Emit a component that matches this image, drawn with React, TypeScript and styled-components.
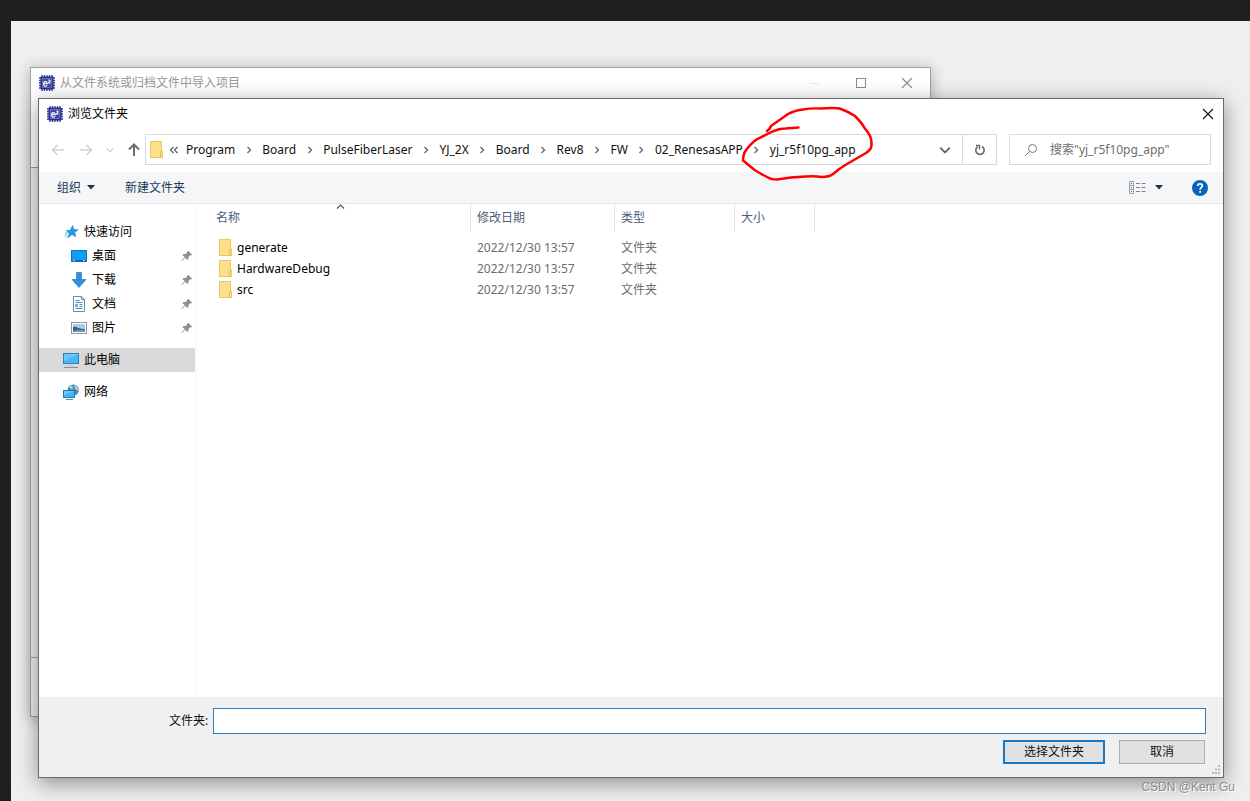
import React from 'react';
import styled, { createGlobalStyle } from 'styled-components';

const GlobalStyle = createGlobalStyle`
  * { box-sizing: border-box; }
  body {
    margin: 0;
    background: #1f1f1f;
    font-family: "Noto Sans", "Noto Sans CJK SC", sans-serif;
    font-size: 12px;
    line-height: 20px;
    color: #111;
  }
  button, input { font: inherit; color: inherit; }
  a { color: inherit; text-decoration: none; }
  svg { display: block; flex: none; }
`;

const Screen = styled.main`
  display: flex;
  min-height: 100vh;
  padding: 21px 0 0 11px;
`;

const Desktop = styled.div`
  position: relative;
  display: flex;
  flex: 1;
  min-width: 0;
  padding: 77px 26px 23px 27px;
  background: #efefef;
  overflow: hidden;
`;

const BackWindow = styled.section`
  position: absolute;
  top: 46px;
  left: 19px;
  bottom: 84px;
  width: 901px;
  display: flex;
  flex-direction: column;
  border: 1px solid #a0a0a0;
  background: #efefef;
  box-shadow: 0 2px 14px rgba(0, 0, 0, 0.28);
`;

const BackHeader = styled.div`
  height: 100px;
  background: #fff;
  border-bottom: 1px solid #a0a0a0;
`;

const BackBody = styled.div`
  flex: 1;
`;

const BackFooter = styled.div`
  height: 59px;
  border-top: 1px solid #a0a0a0;
`;

const TitleBar = styled.header<{ $inactive?: boolean }>`
  display: flex;
  align-items: center;
  gap: 5px;
  height: 29px;
  padding-left: 8px;
  padding-right: ${(p) => (p.$inactive ? 16 : 8)}px;
  color: ${(p) => (p.$inactive ? '#999' : '#000')};
`;

const Title = styled.h1`
  flex: 1;
  margin: 0;
  font-size: 12px;
  font-weight: 400;
`;

const WindowButtons = styled.div`
  display: flex;
  gap: 32px;
`;

const IconButton = styled.button`
  display: flex;
  align-items: center;
  justify-content: center;
  padding: 0;
  border: 0;
  background: none;
`;

const Dialog = styled.section`
  position: relative;
  display: flex;
  flex: 1;
  flex-direction: column;
  min-width: 0;
  border: 1px solid #6a6a6a;
  background: #fff;
  box-shadow: 0 5px 20px rgba(0, 0, 0, 0.42);
`;

const AddressRow = styled.div`
  display: flex;
  align-items: center;
  height: 44px;
  padding: 0 12px 1px 11px;
`;

const NavButtons = styled.nav`
  display: flex;
  align-items: center;
  gap: 12px;
  width: 90px;
  margin-right: 5px;
`;

const AddressBar = styled.div`
  display: flex;
  flex: 1;
  align-items: center;
  height: 31px;
  margin-right: 12px;
  padding-left: 4px;
  border: 1px solid #d9d9d9;
`;

const Crumbs = styled.nav`
  display: flex;
  flex: 1;
  align-items: center;
  margin-left: 5px;
  font-size: 12px;
`;

const Crumb = styled.a`
  position: relative;
  white-space: nowrap;
`;

const Overflow = styled.span`
  margin-right: 7px;
`;

const Separator = styled.span`
  display: flex;
  justify-content: center;
  width: 27px;
`;

const Scribble = styled.svg`
  position: absolute;
  top: -38px;
  left: -32px;
  z-index: 1;
  pointer-events: none;
`;

const BarButton = styled(IconButton)<{ $divided?: boolean }>`
  width: 34px;
  height: 29px;
  border-left: ${(p) => (p.$divided ? '1px solid #d9d9d9' : '0')};
`;

const SearchBox = styled.label`
  display: flex;
  align-items: center;
  gap: 12px;
  width: 202px;
  height: 31px;
  padding-left: 14px;
  border: 1px solid #d9d9d9;
`;

const SearchInput = styled.input`
  flex: 1;
  min-width: 0;
  padding: 0;
  border: 0;
  outline: 0;
  background: none;
  &::placeholder { color: #6d6d6d; opacity: 1; }
`;

const Toolbar = styled.div`
  display: flex;
  align-items: center;
  height: 32px;
  padding: 0 15px 0 18px;
  border-bottom: 1px solid #e4e6ea;
  background: #f5f6f8;
  color: #1e395b;
`;

const ToolButton = styled(IconButton)`
  gap: 6px;
  margin-right: 30px;
`;

const ToolRight = styled.div`
  display: flex;
  align-items: center;
  gap: 29px;
  margin-left: auto;
`;

const Content = styled.div`
  display: flex;
  flex: 1;
`;

const Sidebar = styled.nav`
  width: 158px;
  padding: 16px 1px 0 0;
  border-right: 1px solid #f7f7f7;
`;

const SideItem = styled.a<{ $nested?: boolean; $selected?: boolean; $apart?: boolean }>`
  display: flex;
  align-items: center;
  gap: 5px;
  height: 24px;
  margin-top: ${(p) => (p.$apart ? 8 : 0)}px;
  padding-left: ${(p) => (p.$nested ? 32 : 24)}px;
  padding-right: 2px;
  background: ${(p) => (p.$selected ? '#d9d9d9' : 'transparent')};
  color: #000;
`;

const SideLabel = styled.span`
  flex: 1;
`;

const Files = styled.div`
  flex: 1;
`;

const FileTable = styled.table`
  table-layout: fixed;
  width: 618px;
  border-collapse: separate;
  border-spacing: 0;
`;

const HeadCell = styled.th<{ $width: number; $first?: boolean }>`
  position: relative;
  width: ${(p) => p.$width}px;
  height: 28px;
  padding: 0 0 0 ${(p) => (p.$first ? 19 : 6)}px;
  border-right: 1px solid #e5e5e5;
  color: #4c607a;
  font-weight: 400;
  text-align: left;
`;

const SortMark = styled.svg`
  position: absolute;
  top: 0;
  left: 139px;
`;

const HeadGap = styled.tr`
  height: 5px;
`;

const Cell = styled.td`
  height: 21px;
  padding: 0 0 0 6px;
  color: #6d6d6d;
`;

const NameCell = styled(Cell)`
  padding-left: 22px;
  color: #000;
`;

const FileName = styled.a`
  display: flex;
  align-items: center;
  gap: 4px;
`;

const Footer = styled.form`
  position: relative;
  display: flex;
  flex-direction: column;
  gap: 6px;
  height: 80px;
  padding: 11px 17px 0 130px;
  background: #f0f0f0;
`;

const Field = styled.label`
  display: flex;
  align-items: center;
  gap: 5px;
`;

const FolderInput = styled.input`
  flex: 1;
  min-width: 0;
  height: 26px;
  padding: 0 6px;
  border: 1px solid #2f7fbf;
  outline: 0;
  background: #fff;
`;

const Actions = styled.div`
  display: flex;
  justify-content: flex-end;
  gap: 14px;
  padding-right: 1px;
`;

const ActionButton = styled.button<{ $primary?: boolean }>`
  width: ${(p) => (p.$primary ? 102 : 86)}px;
  height: 24px;
  padding: 0;
  border: ${(p) => (p.$primary ? '2px solid #1878c8' : '1px solid #adadad')};
  background: #e1e1e1;
  line-height: 18px;
`;

const Grip = styled.svg`
  position: absolute;
  right: 2px;
  bottom: 2px;
`;

const Watermark = styled.div`
  position: absolute;
  right: 15px;
  bottom: 4px;
  color: #8c8c8c;
  font-family: "Liberation Sans", sans-serif;
  text-shadow: 1px 1px 0 #fff;
`;

const ChipIcon = () => (
  <svg width="16" height="16" viewBox="0 0 16 16">
    <path d="M3 0v16M5.500 0v16M8 0v16M10.500 0v16M13 0v16M0 3h16M0 5.500h16M0 8h16M0 10.500h16M0 13h16" stroke="#3a4098" strokeWidth="1.300" />
    <rect x="1.500" y="1.500" width="13" height="13" rx="1" fill="#2b3190" />
    <rect x="3.500" y="3.500" width="9" height="9" fill="#3f489f" stroke="#8c93cc" strokeWidth="0.6" />
    <path d="M4.600 8.800h3.600c0-3-3.600-2.800-3.600.2 0 2.700 2.600 2.500 3.500 1.200M9.200 5.400c1.500-1.200 2.400.5 1.200 1.500L9.300 8h2.200" fill="none" stroke="#fff" strokeWidth="1.100" />
  </svg>
);

const CloseIcon = ({ color }: { color: string }) => (
  <svg width="14" height="14" viewBox="0 0 14 14">
    <path d="M2 2l10 10M12 2L2 12" stroke={color} strokeWidth="1.1" />
  </svg>
);

const ArrowIcon = ({ turn, color }: { turn: number; color: string }) => (
  <svg width="16" height="16" viewBox="0 0 16 16">
    <path d="M14 8H3M7.5 3L2.5 8l5 5" fill="none" stroke={color} strokeWidth={turn === 90 ? 2 : 1.5} transform={`rotate(${turn} 8 8)`} />
  </svg>
);

const FolderIcon = () => (
  <svg width="14" height="17" viewBox="0 0 14 17">
    <path d="M.5.5h11v9.500h1v6.500H.5z" fill="#ffe08a" stroke="#e8c75c" />
    <path d="M10.500 16v-4.500l1-1.500" fill="none" stroke="#e5bf45" />
  </svg>
);

const PinIcon = () => (
  <svg width="12" height="12" viewBox="0 0 12 12">
    <path d="M7.2.8l4 4-1.2.6-.8-.1-1.8 1.8.1 2-1 1-2.3-2.3L1 11l-.5-.5 3.2-3.2L1.5 5l1-1 2 .1 1.8-1.8-.1-.8z" fill="#8b949b" />
  </svg>
);

const StarIcon = () => (
  <svg width="16" height="16" viewBox="0 0 16 16">
    <path d="M9.5 1.5l1.4 4 4.1.3-3.3 2.6 1 4.3-3.7-2.2L5 13.7l1.3-4.4-3.1-2.7 4.1-.3z" fill="#2797e0" stroke="#1c7fc8" strokeWidth="0.6" />
    <path d="M2 9h3M1.500 11h3M2.500 13h2" stroke="#67bdf0" />
  </svg>
);

const DesktopIcon = () => (
  <svg width="16" height="16" viewBox="0 0 16 16">
    <rect x=".5" y="2.5" width="15" height="11" fill="#119cfa" stroke="#0b73c2" />
    <path d="M1 12.5h14" stroke="#075fa8" />
    <path d="M2 12.5h2M12 12.5h2" stroke="#a6dcff" />
  </svg>
);

const DownloadIcon = () => (
  <svg width="16" height="16" viewBox="0 0 16 16">
    <path d="M5.5.5h5v7h4.5L8 15.5 1 7.500h4.500z" fill="#3290dc" stroke="#2479c4" strokeWidth="0.7" />
  </svg>
);

const DocumentIcon = () => (
  <svg width="16" height="16" viewBox="0 0 16 16">
    <path d="M2.500.5h8l3 3v12h-11z" fill="#fff" stroke="#7b8790" />
    <path d="M10.500.5v3h3" fill="none" stroke="#7b8790" />
    <path d="M4.500 4.500h4M4.500 6.500h7M8.500 8.500h3M8.500 10.500h3M4.500 12.500h7" stroke="#3a91bd" />
    <rect x="4" y="8" width="3" height="3" fill="#66b4dc" />
  </svg>
);

const PictureIcon = () => (
  <svg width="16" height="16" viewBox="0 0 16 16">
    <rect x=".5" y="2.500" width="15" height="11" fill="#fff" stroke="#9097a0" />
    <rect x="2" y="4" width="12" height="8" fill="#9fd0f0" />
    <path d="M2 7c3-1.500 5 2 12 2v3H2z" fill="#32628c" />
    <path d="M2 11c5-2 8-1 12-1v2H2z" fill="#6d97ae" />
  </svg>
);

const ComputerIcon = () => (
  <svg width="16" height="16" viewBox="0 0 16 16">
    <rect x=".5" y="1.500" width="15" height="10" fill="#48b8f8" stroke="#3d7ea8" />
    <path d="M1 2h14L1 9z" fill="#6cc8fc" />
    <path d="M1 15.500h14" stroke="#7d929e" />
    <path d="M5 13.500h6" stroke="#c2ced5" />
  </svg>
);

const NetworkIcon = () => (
  <svg width="16" height="16" viewBox="0 0 16 16">
    <circle cx="10.300" cy="6" r="5.600" fill="#4c87a8" />
    <path d="M6 3c3-3 5 0 3 3zM11 1c3 1 5 3 4.500 6L12 5z" fill="#a5d5df" />
    <rect x=".5" y="6.500" width="11" height="7" fill="#45b5f5" stroke="#2378b0" />
    <path d="M1 7h9l-9 4z" fill="#6cc8fc" />
    <path d="M3 15.500h7" stroke="#4b91bb" />
  </svg>
);

const Caret = () => (
  <svg width="8" height="5" viewBox="0 0 8 5">
    <path d="M0 0h8L4 4.500z" fill="#1e2f4b" />
  </svg>
);

const ChevronDown = ({ color, size, weight }: { color: string; size: number; weight: number }) => (
  <svg width={size} height={size} viewBox="0 0 10 10">
    <path d="M1 3l4 4 4-4" fill="none" stroke={color} strokeWidth={weight} />
  </svg>
);

const crumbs = ['Program', 'Board', 'PulseFiberLaser', 'YJ_2X', 'Board', 'Rev8', 'FW', '02_RenesasAPP'];

const pinned = [
  { label: '桌面', icon: <DesktopIcon /> },
  { label: '下载', icon: <DownloadIcon /> },
  { label: '文档', icon: <DocumentIcon /> },
  { label: '图片', icon: <PictureIcon /> },
];

const folders = ['generate', 'HardwareDebug', 'src'];

const CrumbArrow = () => (
  <Separator>
    <svg width="6" height="8" viewBox="0 0 6 8">
      <path d="M1.500 1L4.500 4 1.500 7" fill="none" stroke="#6b6b6b" strokeWidth="1.400" />
    </svg>
  </Separator>
);

export default function App() {
  return (
    <Screen>
      <GlobalStyle />
      <Desktop>
        <BackWindow>
          <BackHeader>
            <TitleBar $inactive>
              <ChipIcon />
              <Title as="h2">从文件系统或归档文件中导入项目</Title>
              <WindowButtons>
                <IconButton aria-label="最小化">
                  <svg width="14" height="14" viewBox="0 0 14 14"><path d="M2 7.500h10" stroke="#ededed" /></svg>
                </IconButton>
                <IconButton aria-label="最大化">
                  <svg width="14" height="14" viewBox="0 0 14 14"><rect x="2.500" y="2.500" width="9" height="9" fill="none" stroke="#8c8c8c" /></svg>
                </IconButton>
                <IconButton aria-label="关闭"><CloseIcon color="#8c8c8c" /></IconButton>
              </WindowButtons>
            </TitleBar>
          </BackHeader>
          <BackBody />
          <BackFooter />
        </BackWindow>

        <Dialog>
          <TitleBar>
            <ChipIcon />
            <Title>浏览文件夹</Title>
            <IconButton aria-label="关闭"><CloseIcon color="#111" /></IconButton>
          </TitleBar>

          <AddressRow>
            <NavButtons>
              <IconButton aria-label="后退"><ArrowIcon turn={0} color="#d3d3d3" /></IconButton>
              <IconButton aria-label="前进"><ArrowIcon turn={180} color="#d3d3d3" /></IconButton>
              <IconButton aria-label="最近的位置"><ChevronDown color="#d0d0d0" size={8} weight={1.5} /></IconButton>
              <IconButton aria-label="上移"><ArrowIcon turn={90} color="#6e6e6e" /></IconButton>
            </NavButtons>
            <AddressBar>
              <FolderIcon />
              <Crumbs>
                <Overflow>
                  <svg width="10" height="8" viewBox="0 0 10 8">
                    <path d="M4.500 1L1.500 4l3 3M8.500 1L5.500 4l3 3" fill="none" stroke="#555" strokeWidth="1.200" />
                  </svg>
                </Overflow>
                {crumbs.map((name, i) => (
                  <React.Fragment key={i}>
                    <Crumb href="#">{name}</Crumb>
                    <CrumbArrow />
                  </React.Fragment>
                ))}
                <Crumb href="#">
                  yj_r5f10pg_app
                  <Scribble width="140" height="84" viewBox="737 101 140 84">
                    <path
                      d="M766 130q3-2 4-5l17-12q8-4 15-4.500Q810 107 820 107.500q15-1 20 .5 8 3 14 7 7 7 9.500 12 6 7 6.500 11 1 5 0 9-2 3-5 5l-19 11q-7 4-14 10-4 3-11 3-8-1-16-.5l-15 1-14 2q-6 0-9-2-10-5-14-8-6-5-11-9 0-4 1.500-8 5-8 12-13l14-7q8-4 15-4l13-1"
                      fill="none"
                      stroke="#f00"
                      strokeWidth="2.500"
                      strokeLinecap="round"
                      strokeLinejoin="round"
                    />
                  </Scribble>
                </Crumb>
              </Crumbs>
              <BarButton aria-label="以前的位置"><ChevronDown color="#666" size={12} weight={1.6} /></BarButton>
              <BarButton $divided aria-label="刷新">
                <svg width="12" height="12" viewBox="0 0 12 12">
                  <path d="M8 2.500A4.200 4.200 0 1 1 3.500 2.800" fill="none" stroke="#666" strokeWidth="1.600" />
                  <path d="M2 1.500h3.500V5.500" fill="none" stroke="#666" strokeWidth="1.400" />
                </svg>
              </BarButton>
            </AddressBar>
            <SearchBox>
              <svg width="14" height="14" viewBox="0 0 14 14">
                <circle cx="8.500" cy="5.500" r="4" fill="none" stroke="#777" />
                <path d="M5.500 8.500L1 13" stroke="#777" />
              </svg>
              <SearchInput type="search" aria-label="搜索" placeholder={'搜索"yj_r5f10pg_app"'} />
            </SearchBox>
          </AddressRow>

          <Toolbar>
            <ToolButton>组织 <Caret /></ToolButton>
            <ToolButton>新建文件夹</ToolButton>
            <ToolRight>
              <IconButton aria-label="更改视图">
                <svg width="34" height="14" viewBox="0 0 34 14">
                  <path d="M.5.500h4v12h-4zM.5 4.500h4M.5 8.500h4" fill="none" stroke="#999ea6" />
                  <path d="M2 2.500h1M2 6.500h1M2 10.500h1" stroke="#566070" />
                  <path d="M7 2.500h4M12.500 2.500h4M7 6.500h4M12.500 6.500h4M7 10.500h4M12.500 10.500h4" stroke="#7c838d" />
                  <path d="M26 4h8l-4 4.500z" fill="#1e2f4b" />
                </svg>
              </IconButton>
              <IconButton aria-label="帮助">
                <svg width="16" height="16" viewBox="0 0 16 16">
                  <circle cx="8" cy="8" r="8" fill="#0a64b8" />
                  <path d="M5.700 6c0-3 4.700-2.800 4.700-.3C10.400 7.500 8.100 7.500 8.100 9.700M8.100 11v1.700" fill="none" stroke="#fff" strokeWidth="1.700" />
                </svg>
              </IconButton>
            </ToolRight>
          </Toolbar>

          <Content>
            <Sidebar>
              <SideItem href="#"><StarIcon /><SideLabel>快速访问</SideLabel></SideItem>
              {pinned.map(({ label, icon }) => (
                <SideItem key={label} href="#" $nested>
                  {icon}
                  <SideLabel>{label}</SideLabel>
                  <PinIcon />
                </SideItem>
              ))}
              <SideItem href="#" $apart $selected><ComputerIcon /><SideLabel>此电脑</SideLabel></SideItem>
              <SideItem href="#" $apart><NetworkIcon /><SideLabel>网络</SideLabel></SideItem>
            </Sidebar>
            <Files>
              <FileTable>
                <thead>
                  <tr>
                    <HeadCell $width={274} $first>
                      名称
                      <SortMark width="9" height="5" viewBox="0 0 9 5">
                        <path d="M1 4.500L4.500 1 8 4.500" fill="none" stroke="#555" strokeWidth="1.200" />
                      </SortMark>
                    </HeadCell>
                    <HeadCell $width={144}>修改日期</HeadCell>
                    <HeadCell $width={120}>类型</HeadCell>
                    <HeadCell $width={80}>大小</HeadCell>
                  </tr>
                </thead>
                <tbody>
                  <HeadGap />
                  {folders.map((name) => (
                    <tr key={name}>
                      <NameCell><FileName href="#"><FolderIcon />{name}</FileName></NameCell>
                      <Cell>2022/12/30 13:57</Cell>
                      <Cell>文件夹</Cell>
                      <Cell />
                    </tr>
                  ))}
                </tbody>
              </FileTable>
            </Files>
          </Content>

          <Footer>
            <Field>
              文件夹:
              <FolderInput type="text" />
            </Field>
            <Actions>
              <ActionButton type="button" $primary>选择文件夹</ActionButton>
              <ActionButton type="button">取消</ActionButton>
            </Actions>
            <Grip width="10" height="10" viewBox="0 0 10 10">
              <path d="M7 1h2M4 4.500h2M7 4.500h2M1 8h2M4 8h2M7 8h2" stroke="#b8b8b8" strokeWidth="2" />
            </Grip>
          </Footer>
        </Dialog>
        <Watermark>CSDN @Kent Gu</Watermark>
      </Desktop>
    </Screen>
  );
}
